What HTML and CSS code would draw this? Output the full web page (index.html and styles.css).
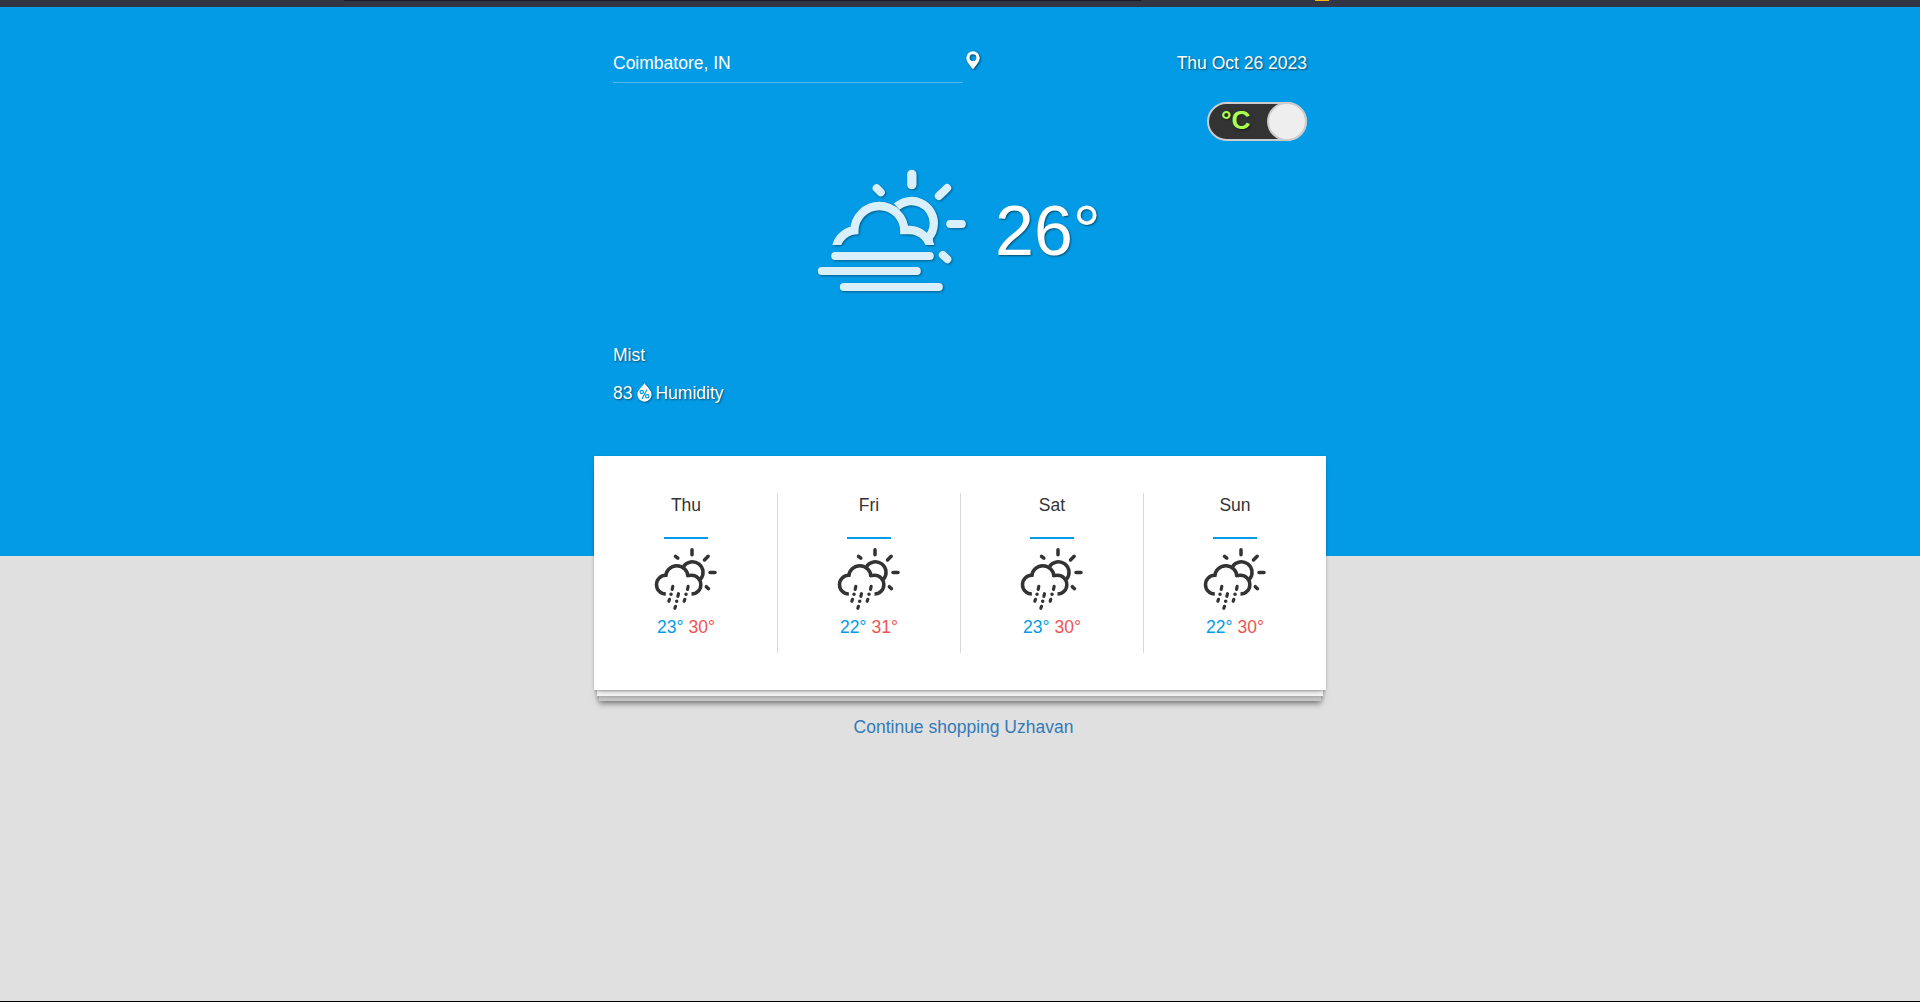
FILE: index.html
```html
<!DOCTYPE html>
<html lang="en">
<head>
<meta charset="utf-8">
<title>Weather</title>
<link rel="stylesheet" href="styles.css">
</head>
<body>
<svg class="defs" aria-hidden="true">
  <symbol id="rain-sun" viewBox="222.500 321 192 192">
    <g fill="none" stroke="#333" stroke-width="10.500">
      <path d="M311 379.500A32 32 0 1 1 362 418"/>
      <path d="M258 462A28 28 0 0 1 258 406M257.500 411A33.500 33.500 0 0 1 324.500 411M321 407Q328 406 335 406A28 28 0 0 1 335 462"/>
      <g stroke-linecap="round">
        <path d="M336.500 329V344M374 360L385 349M390.500 397.500H405.500M287 349L294 354.500M379.500 440L386 446" stroke-width="10.500"/>
        <path d="M279 439L277 448M269 478L267 484M296 461L294 469M287 499L285 505M325 439L323 448M315 478L313 484" stroke-width="9.500"/>
        <path d="M273.500 463h.1M290.500 484h.1M318.500 463h.1"/>
      </g>
    </g>
  </symbol>
</svg>
<div class="browser-bar"><span class="address"></span><span class="badge"></span></div>
<main class="weather">
  <section class="current">
    <header class="top">
      <div class="place">
        <input class="city" type="text" value="Coimbatore, IN">
        <svg class="pin" viewBox="0 0 14 19"><path fill="#fff" fill-rule="evenodd" d="M7 .2A6.700 6.700 0 0 0 .3 6.900C.3 10.500 4 14.500 7 18.200 10 14.500 13.700 10.500 13.700 6.900A6.700 6.700 0 0 0 7 .2ZM7 3.300A3.400 3.400 0 1 1 7 10.100 3.400 3.400 0 0 1 7 3.300Z"/></svg>
      </div>
      <div class="date">Thu Oct 26 2023</div>
    </header>
    <div class="units"><div class="toggle"><span class="unit">°C</span><span class="knob"></span></div></div>
    <div class="now">
      <svg class="mist" viewBox="48.500 42 456 372">
        <clipPath id="cloud-base"><path d="M48 42H504V270H48Z"/></clipPath>
        <g fill="none" stroke="#d9f0fc" stroke-width="25">
          <g clip-path="url(#cloud-base)">
            <path d="M108 280A66 66 0 0 1 175 225M163.500 237V228A75 75 0 0 1 313.500 228V237M301 225H330A66 66 0 0 1 393 280"/>
            <path d="M290.500 155A67 67 0 0 1 402 205A67 67 0 0 1 383.500 251L390 262"/>
          </g>
          <g stroke-linecap="round">
            <path d="M336 58V89" stroke-width="28"/>
            <path d="M417 123L442 99M451 207H486M230.500 99.500L243 112M429 300L442.500 312.500M106 303H390M66 348H351M132 396H417" stroke-width="24"/>
          </g>
        </g>
      </svg>
      <span class="temp">26°</span>
    </div>
    <div class="details">
      <div>Mist</div>
      <div class="humidity">83 <svg class="drop" viewBox="0 0 15 19"><path fill="#fff" d="M7.500 .3C10 4 14.600 7.500 14.600 11.600A7.100 7.100 0 0 1 .4 11.600C.4 7.500 5 4 7.500 .3Z"/><g fill="none" stroke="#039be5" stroke-width="1.200"><path d="M10 6.500L5 16"/><circle cx="4.800" cy="9" r="1.700"/><circle cx="10.200" cy="13.300" r="1.700"/></g></svg> Humidity</div>
    </div>
  </section>
  <section class="forecast">
    <div class="day"><div class="name">Thu</div><hr class="rule"><svg class="icon"><use href="#rain-sun"/></svg><div class="range"><span class="low">23°</span> <span class="high">30°</span></div></div>
    <div class="day"><div class="name">Fri</div><hr class="rule"><svg class="icon"><use href="#rain-sun"/></svg><div class="range"><span class="low">22°</span> <span class="high">31°</span></div></div>
    <div class="day"><div class="name">Sat</div><hr class="rule"><svg class="icon"><use href="#rain-sun"/></svg><div class="range"><span class="low">23°</span> <span class="high">30°</span></div></div>
    <div class="day"><div class="name">Sun</div><hr class="rule"><svg class="icon"><use href="#rain-sun"/></svg><div class="range"><span class="low">22°</span> <span class="high">30°</span></div></div>
  </section>
  <a class="shop">Continue shopping Uzhavan</a>
</main>
</body>
</html>
```
FILE: styles.css
```css
* { box-sizing: border-box; }
body {
  margin: 0;
  height: 1002px;
  overflow: hidden;
  display: flex;
  flex-direction: column;
  font: 17.5px/25px "Liberation Sans", Arial, sans-serif;
  color: #333;
  background: #e0e0e0;
  border-bottom: 1px solid #000;
}
.defs { position: absolute; width: 0; height: 0; }
.browser-bar {
  flex: none;
  display: flex;
  height: 7px;
  padding-left: 344px;
  background: #323644;
}
.address { width: 797px; height: 1px; background: #1a1b24; }
.badge { width: 14px; height: 1px; margin-left: 174px; background: #ffb300; }
.weather {
  flex: 1;
  display: flex;
  flex-direction: column;
  align-items: center;
  background: linear-gradient(#039be5 549px, #e0e0e0 549px);
}
.current {
  width: 732px;
  height: 449px;
  flex: none;
  padding: 44px 19px 0;
  color: #fff;
  text-shadow: 1px 1px 2px rgba(0, 0, 0, .5);
}
.top { display: flex; justify-content: space-between; height: 32px; }
.place { display: flex; gap: 3px; }
.city {
  width: 350px;
  height: 32px;
  padding: 0 0 7px;
  border: 0;
  border-bottom: 1px solid #4fb9ed;
  font: inherit;
  color: inherit;
  background: transparent;
}
.pin { width: 14px; height: 19px; filter: drop-shadow(1px 1px 1px rgba(0, 0, 0, .5)); }
.units { display: flex; justify-content: flex-end; padding-top: 19px; }
.toggle {
  display: flex;
  justify-content: space-between;
  width: 100px;
  height: 39px;
  border: 2px solid #ccc;
  border-radius: 20px;
  background: #333;
}
.unit { padding-left: 12px; font-weight: bold; font-size: 26.25px; line-height: 33px; color: #adff4f; }
.knob {
  width: 40px;
  height: 39px;
  margin: -2px;
  border: 2px solid #ccc;
  border-radius: 50%;
  background: #eee;
}
.now { display: flex; height: 124px; margin-top: 28px; padding-left: 203px; }
.mist { width: 152px; height: 124px; filter: drop-shadow(1px 1px 1px rgba(0, 0, 0, .4)); }
.temp { margin-left: 27px; font-size: 70px; line-height: 124px; }
.details { display: grid; gap: 13px; margin-top: 50px; }
.humidity { display: flex; gap: 4px; }
.drop { width: 15px; height: 19px; margin: 2px -1px 0 1px; filter: drop-shadow(1px 1px 1px rgba(0, 0, 0, .4)); }
.forecast {
  flex: none;
  display: grid;
  grid-template-columns: repeat(4, 1fr);
  width: 732px;
  height: 234px;
  padding: 37px 0;
  background: #fff;
  box-shadow:
    0 0 2px rgba(0, 0, 0, .1),
    0 3px 5px -3px rgba(0, 0, 0, .6),
    0 9px 0 -3px #f5f5f5,
    0 10px 5px -4px rgba(0, 0, 0, .35),
    0 16px 0 -5px #cacaca,
    0 18px 6px -5px rgba(0, 0, 0, .55);
}
.day {
  display: flex;
  flex-direction: column;
  align-items: center;
  border-left: 1px solid #d9d9d9;
}
.day:first-child { border-left-color: transparent; }
.rule { width: 44px; height: 2px; margin: 19px 0 8px; border: 0; background: #039be5; }
.icon { width: 64px; height: 64px; margin-bottom: 4px; }
.low { color: #039be5; }
.high { color: #ef5350; }
.shop { margin: 25px 0 0 7px; color: #337ab7; }
```
